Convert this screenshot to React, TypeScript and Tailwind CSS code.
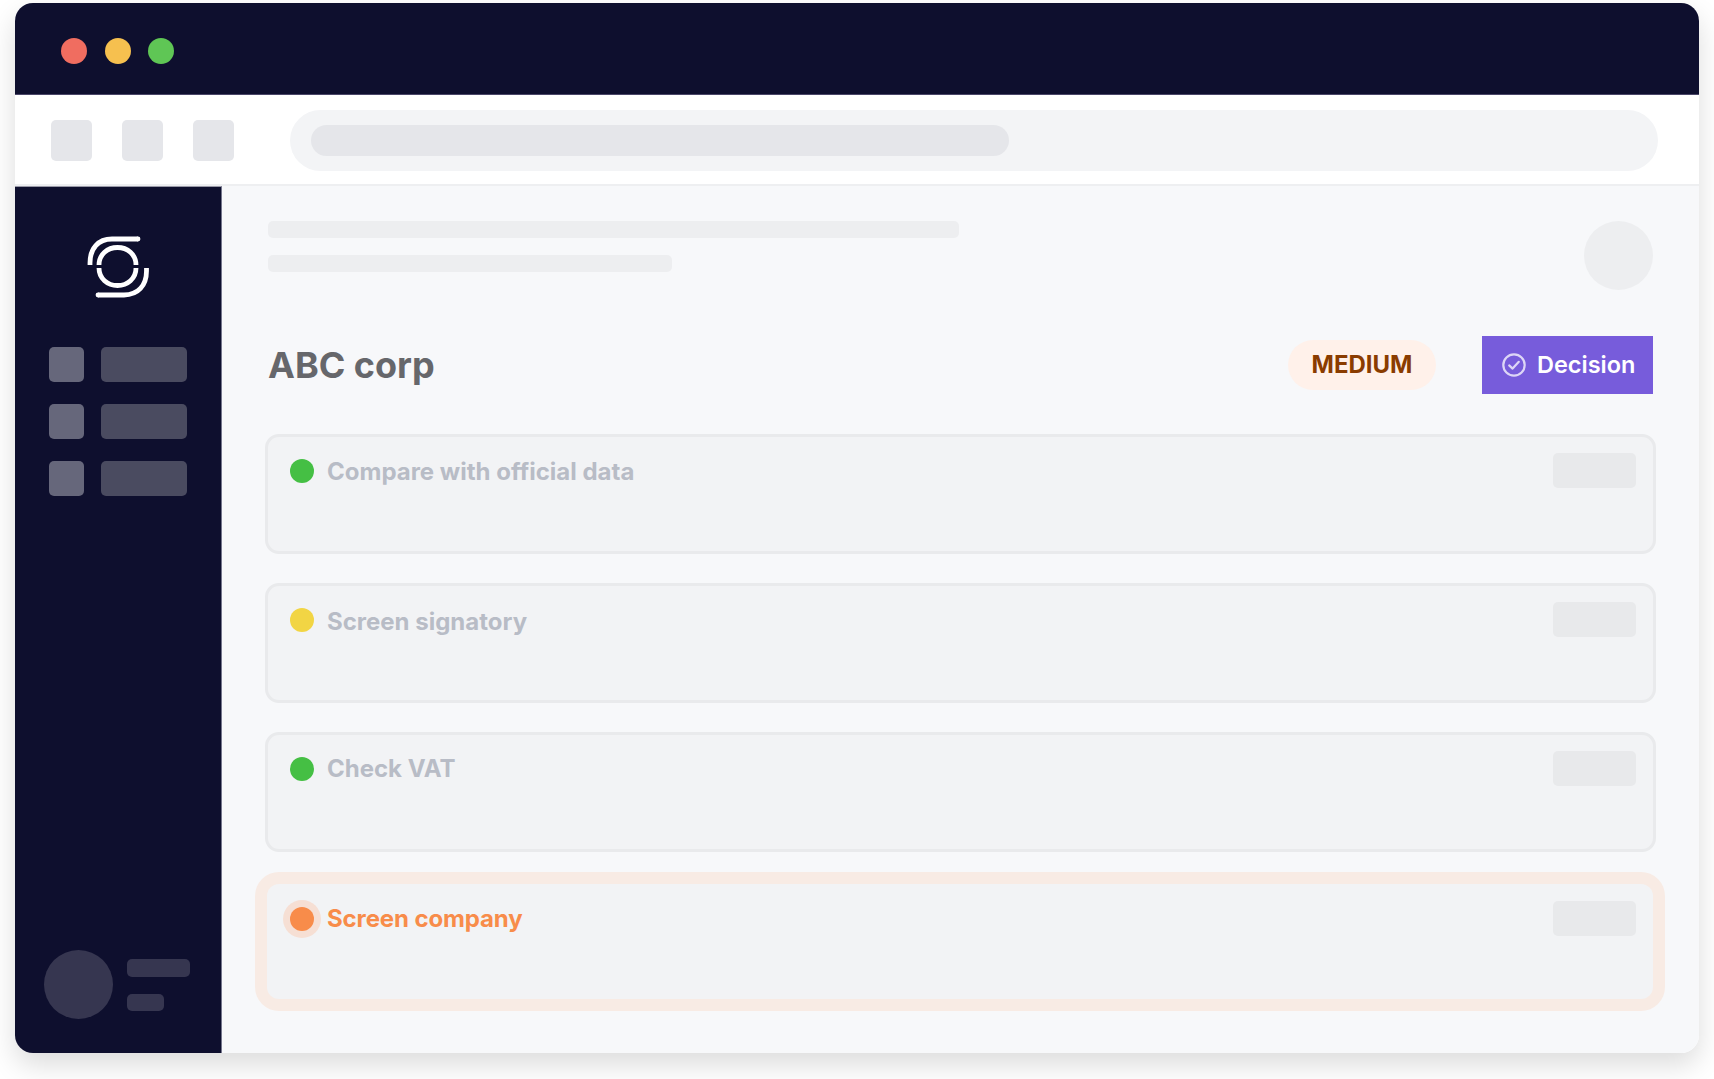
const tasks = [
  { label: "Compare with official data", dot: "bg-[#45bf44]", nudge: "mt-[2px]" },
  { label: "Screen signatory", dot: "bg-[#f2d544]", nudge: "mt-[4px]" },
  { label: "Check VAT", dot: "bg-[#45bf44]", nudge: "mt-0" },
]

function Logo() {
  return (
    <svg width="64" height="64" viewBox="0 0 64 64" fill="none" stroke="white" strokeWidth="4.8" aria-hidden="true">
      <path d="M4 30V28C4 13.5 12 4 26 4H52" />
      <path d="M52 4H52.01" strokeLinecap="round" />
      <path d="M60.5 33V36C60.5 50.5 52 60 38 60H12" />
      <path d="M12 60H12.01" strokeLinecap="round" />
      <path d="M13 30C13 19.5 21.5 12.5 31.5 12.5C41.5 12.5 50 19.5 50 30" />
      <path d="M13 33C13 43.5 21.5 50.5 31.5 50.5C41.5 50.5 50 43.5 50 33" />
    </svg>
  )
}

function NavRow() {
  return (
    <div className="flex gap-[17px]">
      <div className="h-[35px] w-[35px] rounded-[5px] bg-[#66677b]" />
      <div className="h-[35px] w-[86px] rounded-[5px] bg-[#4a4b60]" />
    </div>
  )
}

function Sidebar() {
  return (
    <aside className="flex w-[207px] flex-col border-r border-t border-r-[#75768c] border-t-[#9a9aa8] bg-[#0e0f2e]">
      <div className="ml-[71px] mt-[48px]">
        <Logo />
      </div>
      <div className="ml-[34px] mt-[48px] flex flex-col gap-[22px]">
        <NavRow />
        <NavRow />
        <NavRow />
      </div>
      <div className="ml-[29px] mt-auto mb-[34px] flex items-center gap-[14px]">
        <div className="h-[69px] w-[69px] rounded-full bg-[#363650]" />
        <div className="flex flex-col gap-[17px]">
          <div className="h-[18px] w-[63px] rounded-[5px] bg-[#363650]" />
          <div className="h-[17px] w-[37px] rounded-[5px] bg-[#363650]" />
        </div>
      </div>
    </aside>
  )
}

function TaskCard({ label, dot, nudge }: { label: string; dot: string; nudge: string }) {
  return (
    <div className="flex h-[120px] items-start justify-between rounded-[14px] border-[3px] border-[#e9eaec] bg-[#f2f3f5] pl-[22px] pr-[17px] pt-[16px]">
      <div className="flex h-[35px] items-center gap-[13px]">
        <div className={`h-[24px] w-[24px] rounded-full ${dot}`} />
        <span className={`text-[24px] font-bold leading-none text-[#b8bcc6] ${nudge}`}>{label}</span>
      </div>
      <div className="h-[35px] w-[83px] rounded-[5px] bg-[#e8e9eb]" />
    </div>
  )
}

export default function App() {
  return (
    <div className="h-[1079px] w-[1714px] overflow-hidden bg-white pl-[15px] pt-[3px] font-['Inter',sans-serif]">
      <div className="flex h-[1050px] w-[1684px] flex-col overflow-hidden rounded-[18px] shadow-[0_12px_28px_rgba(0,0,0,0.14)]">
        <div className="flex h-[92px] items-center gap-[17.5px] border-b border-[#4a4668] bg-[#0e0f2e] pl-[46px] pt-[5px]">
          <div className="h-[26px] w-[26px] rounded-full bg-[#f06d60]" />
          <div className="h-[26px] w-[26px] rounded-full bg-[#f6c04f]" />
          <div className="h-[26px] w-[26px] rounded-full bg-[#5fc655]" />
        </div>

        <div className="flex h-[91px] items-center border-b-2 border-[#eeeff1] bg-white pl-[36px] pr-[41px] pt-[2px]">
          <div className="flex gap-[30px]">
            <div className="h-[41px] w-[41px] rounded-[5px] bg-[#e5e6ea]" />
            <div className="h-[41px] w-[41px] rounded-[5px] bg-[#e5e6ea]" />
            <div className="h-[41px] w-[41px] rounded-[5px] bg-[#e5e6ea]" />
          </div>
          <div className="ml-[56px] flex h-[61px] flex-1 items-center rounded-full bg-[#f3f4f6] pl-[21px]">
            <div className="h-[31px] w-[698px] rounded-full bg-[#e5e6ea]" />
          </div>
        </div>

        <div className="flex flex-1">
          <Sidebar />
          <main className="flex-1 bg-[#f7f8fa] pl-[43px] pr-[43px] pt-[35px]">
            <div className="flex items-start justify-between pl-[3px] pr-[3px]">
              <div className="flex flex-col gap-[17px]">
                <div className="h-[17px] w-[691px] rounded-[5px] bg-[#edeef0]" />
                <div className="h-[17px] w-[404px] rounded-[5px] bg-[#edeef0]" />
              </div>
              <div className="h-[69px] w-[69px] rounded-full bg-[#edeef0]" />
            </div>

            <div className="mt-[46px] flex h-[58px] items-center pl-[3px] pr-[3px]">
              <h1 className="text-[36px] font-bold leading-none text-[#66676b]">ABC corp</h1>
              <div className="ml-auto flex h-[50px] w-[148px] items-center justify-center rounded-full bg-[#fff1ea] text-[24px] font-bold leading-none text-[#8a3c00]">
                MEDIUM
              </div>
              <button className="ml-[46px] flex h-[58px] w-[171px] items-center gap-[11px] bg-[#775cdb] pl-[20px] text-[23.5px] font-semibold leading-none text-white">
                <svg width="24" height="24" viewBox="0 0 24 24" fill="none" stroke="white" strokeOpacity="0.75" strokeWidth="2.2" strokeLinecap="round" strokeLinejoin="round" aria-hidden="true">
                  <circle cx="12" cy="12" r="10.7" />
                  <path d="M7.2 12.4L10.6 15.6L16.8 8.8" />
                </svg>
                Decision
              </button>
            </div>

            <div className="mt-[40px] flex flex-col gap-[29px]">
              {tasks.map((t) => (
                <TaskCard key={t.label} label={t.label} dot={t.dot} nudge={t.nudge} />
              ))}
              <div className="ml-[2px] mr-[3px] mt-[3px] flex h-[115px] items-start justify-between rounded-[12px] bg-[#f2f3f5] pl-[23px] pr-[17px] pt-[17px] ring-[12px] ring-[#f8ebe4]">
                <div className="flex h-[35px] items-center gap-[13px]">
                  <div className="h-[24px] w-[24px] rounded-full bg-[#f88c4a] ring-[7px] ring-[#f6dfd4]" />
                  <span className="text-[24px] font-bold leading-none tracking-[-0.005em] text-[#f88c4a]">Screen company</span>
                </div>
                <div className="h-[35px] w-[83px] rounded-[5px] bg-[#e8e9eb]" />
              </div>
            </div>
          </main>
        </div>
      </div>
    </div>
  )
}
